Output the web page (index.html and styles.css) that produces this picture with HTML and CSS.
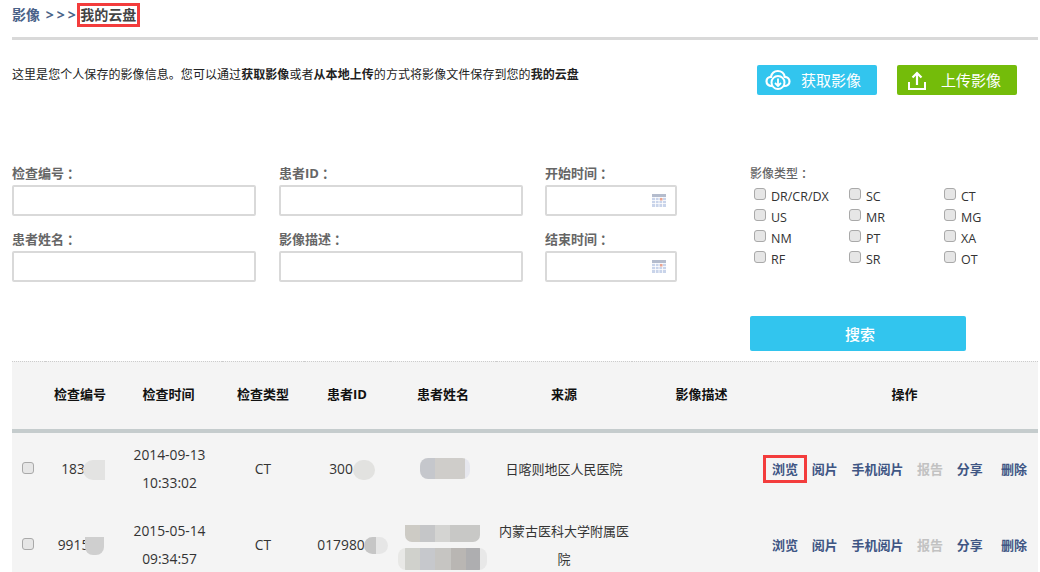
FILE: index.html
```html
<!DOCTYPE html>
<html lang="zh-CN">
<head>
<meta charset="utf-8">
<title>我的云盘</title>
<link rel="stylesheet" href="styles.css">
</head>
<body>
<header class="crumb">
  <span class="crumb-path">影像 <span class="arrows">&gt;&gt;&gt;</span></span>
  <span class="crumb-current">我的云盘</span>
</header>
<section class="intro">
  <p class="intro-text">这里是您个人保存的影像信息。您可以通过<b>获取影像</b>或者<b>从本地上传</b>的方式将影像文件保存到您的<b>我的云盘</b></p>
  <div class="intro-actions">
    <a class="btn btn-blue">
      <svg class="btn-icon" width="26" height="22" viewBox="0 0 26 22" fill="none" stroke="#fff" stroke-width="2.2"><path d="M7 17H6.500C3.600 17 1.500 14.900 1.500 12.300S3.600 7.800 6 7.800C6.800 4.200 9.600 2 12.800 2c3.600 0 6.400 2.500 6.900 5.800 2.800.1 4.800 2.200 4.800 4.700S22.400 17 19.500 17H19"/><circle cx="13" cy="13.500" r="6.500" stroke-width="2"/><path d="M13 9.500v7M10 14l3 3 3-3" stroke-width="1.800"/></svg>
      <span>获取影像</span>
    </a>
    <a class="btn btn-green">
      <svg class="btn-icon" width="18" height="19" viewBox="0 0 18 19" fill="none" stroke="#fff" stroke-width="2"><path d="M9 14V2M4.500 6.500 9 2l4.500 4.500" stroke-width="2.200"/><path d="M1 11v7h16v-7"/></svg>
      <span>上传影像</span>
    </a>
  </div>
</section>
<form class="filters">
  <div class="col col-wide">
    <label class="field"><span class="field-label">检查编号<i>：</i></span><input class="text-input" type="text"></label>
    <label class="field"><span class="field-label">患者姓名<i>：</i></span><input class="text-input" type="text"></label>
  </div>
  <div class="col col-wide col-second">
    <label class="field"><span class="field-label">患者ID<i>：</i></span><input class="text-input" type="text"></label>
    <label class="field"><span class="field-label">影像描述<i>：</i></span><input class="text-input" type="text"></label>
  </div>
  <div class="col col-date">
    <label class="field"><span class="field-label">开始时间<i>：</i></span>
      <span class="date-input"><input type="text">
        <svg width="14" height="13" viewBox="0 0 14 13"><rect width="14" height="13" fill="#c9d4ea"/><rect width="14" height="3" fill="#b4bccd"/><path d="M0 3.500h14M0 6.500h14M0 9.500h14M3.500 3v10M7 3v10M10.500 3v10" stroke="#fff" stroke-width=".8"/><rect x="8" y="4" width="2.500" height="2.500" fill="#eba48f"/></svg>
      </span></label>
    <label class="field"><span class="field-label">结束时间<i>：</i></span>
      <span class="date-input"><input type="text">
        <svg width="14" height="13" viewBox="0 0 14 13"><rect width="14" height="13" fill="#c9d4ea"/><rect width="14" height="3" fill="#b4bccd"/><path d="M0 3.500h14M0 6.500h14M0 9.500h14M3.500 3v10M7 3v10M10.500 3v10" stroke="#fff" stroke-width=".8"/><rect x="8" y="4" width="2.500" height="2.500" fill="#eba48f"/></svg>
      </span></label>
  </div>
  <div class="col col-types">
    <div class="types-label">影像类型<i>：</i></div>
    <div class="types-grid">
      <label class="type"><input class="check" type="checkbox">DR/CR/DX</label>
      <label class="type"><input class="check" type="checkbox">SC</label>
      <label class="type"><input class="check" type="checkbox">CT</label>
      <label class="type"><input class="check" type="checkbox">US</label>
      <label class="type"><input class="check" type="checkbox">MR</label>
      <label class="type"><input class="check" type="checkbox">MG</label>
      <label class="type"><input class="check" type="checkbox">NM</label>
      <label class="type"><input class="check" type="checkbox">PT</label>
      <label class="type"><input class="check" type="checkbox">XA</label>
      <label class="type"><input class="check" type="checkbox">RF</label>
      <label class="type"><input class="check" type="checkbox">SR</label>
      <label class="type"><input class="check" type="checkbox">OT</label>
    </div>
    <button class="search" type="button">搜索</button>
  </div>
</form>
<table class="records">
  <colgroup>
    <col class="c-check"><col class="c-no"><col class="c-time"><col class="c-type"><col class="c-id"><col class="c-name"><col class="c-src"><col class="c-desc"><col class="c-ops">
  </colgroup>
  <thead>
    <tr><th></th><th>检查编号</th><th>检查时间</th><th>检查类型</th><th>患者ID</th><th>患者姓名</th><th>来源</th><th>影像描述</th><th>操作</th></tr>
  </thead>
  <tbody>
    <tr>
      <td><input class="check row-check" type="checkbox"></td>
      <td class="num">183<span class="mask mask-a"></span></td>
      <td class="num time">2014-09-13<br>10:33:02</td>
      <td class="num">CT</td>
      <td class="num">300<span class="mask mask-b"></span></td>
      <td><span class="mask-block mask-name1"></span></td>
      <td>日喀则地区人民医院</td>
      <td></td>
      <td class="ops"><a class="op marked">浏览</a><a class="op">阅片</a><a class="op">手机阅片</a><a class="op off">报告</a><a class="op">分享</a><a class="op op-last">删除</a></td>
    </tr>
    <tr>
      <td><input class="check row-check" type="checkbox"></td>
      <td class="num">9915<span class="mask mask-c"></span></td>
      <td class="num time">2015-05-14<br>09:34:57</td>
      <td class="num">CT</td>
      <td class="num">017980<span class="mask mask-d"></span></td>
      <td><span class="mask-block mask-name2"></span><span class="mask-block mask-name3"></span></td>
      <td>内蒙古医科大学附属医院</td>
      <td></td>
      <td class="ops"><a class="op">浏览</a><a class="op">阅片</a><a class="op">手机阅片</a><a class="op off">报告</a><a class="op">分享</a><a class="op op-last">删除</a></td>
    </tr>
  </tbody>
</table>
</body>
</html>
```
FILE: styles.css
```css
* { box-sizing: border-box; }
html, body { height: 572px; overflow: hidden; }
body {
  margin: 0;
  padding: 0 2px 0 12px;
  background: #fff;
  color: #333;
  font: 13px/20px "Open Sans", "Noto Sans CJK SC", sans-serif;
}
i { font-style: normal; font-family: "Noto Sans CJK TC", sans-serif; padding-left: 3px; }

.crumb {
  height: 40px;
  padding-top: 3px;
  border-bottom: 3px solid #d9d9d9;
  display: flex;
  align-items: flex-start;
  font-size: 14px;
  font-weight: 700;
}
.crumb-path { color: #4a6288; line-height: 24px; white-space: nowrap; }
.arrows { margin: 0 -2px 0 2px; letter-spacing: 3px; font-size: 14px; }
.crumb-current {
  height: 24px;
  padding: 0 .5px;
  border: 3px solid #f33c3c;
  color: #444;
  line-height: 18px;
}

.intro { display: flex; justify-content: space-between; padding: 25px 21px 0 0; }
.intro-text { margin: 0; font-size: 12px; letter-spacing: .06px; color: #222; }
.intro-actions { display: flex; gap: 20px; }
.btn {
  width: 120px;
  height: 30px;
  border-radius: 2px;
  display: flex;
  align-items: center;
  color: #fff;
  font-size: 15px;
}
.btn-blue { background: #32c5ee; padding-left: 8px; gap: 10px; }
.btn-green { background: #74bc0a; padding-left: 11px; gap: 15px; }
.btn-icon { flex: none; }

.filters { display: flex; margin-top: 68px; }
.col-wide { width: 244px; margin-right: 23px; }
.col-second { margin-right: 22px; }
.col-date { width: 132px; margin-right: 73px; }
.col-types { width: 216px; }
.field { display: block; margin-bottom: 13px; }
.field-label { display: block; height: 22px; font-weight: 700; color: #666; }
.text-input, .date-input {
  display: flex;
  width: 100%;
  height: 31px;
  border: 2px solid #d9d9d9;
  border-radius: 2px;
  background: #fff;
}
.date-input { align-items: center; padding-right: 9px; }
.date-input input { flex: 1; min-width: 0; border: 0; outline: 0; background: none; }

.types-label { height: 22px; font-size: 12px; font-weight: 500; color: #666; }
.types-grid { display: grid; grid-template-columns: 95px 95px 70px; grid-auto-rows: 21px; padding-left: 4px; }
.type { display: flex; align-items: flex-start; gap: 5px; font-size: 12.500px; line-height: 23px; color: #333; white-space: nowrap; }
.check {
  appearance: none;
  width: 12px;
  height: 12px;
  margin: 3px 0 0;
  border: 1px solid #a9a9a9;
  border-radius: 3px;
  background: #e6e6e6;
  flex: none;
}
.search {
  display: block;
  width: 216px;
  height: 35px;
  margin-top: 47px;
  padding: 0 0 0 4px;
  border: 0;
  border-radius: 2px;
  background: #32c5ee;
  color: #fff;
  font: 500 15px "Open Sans", "Noto Sans CJK SC", sans-serif;
}

.records {
  width: 1026px;
  margin-top: 10px;
  border-collapse: collapse;
  table-layout: fixed;
  background: #f4f4f4;
  border-top: 1px dotted #ccc;
}
.c-check { width: 33px; }
.c-no { width: 70px; }
.c-time { width: 107px; }
.c-type { width: 82px; }
.c-id { width: 86px; }
.c-name { width: 106px; }
.c-src { width: 136px; }
.c-desc { width: 139px; }
th {
  height: 69px;
  padding: 0 0 2px;
  border-bottom: 4px solid #c5cccd;
  font-weight: 700;
  color: #111;
}
td {
  height: 76px;
  padding: 0 0 4px;
  text-align: center;
  line-height: 28px;
  color: #333;
}
.num { font-size: 13.800px; white-space: nowrap; }
td.time { padding-left: 2px; }
.row-check { display: block; margin: -2px 0 0 10px; }

.mask { display: inline-block; vertical-align: middle; }
.mask-a { width: 22px; height: 20px; margin-left: -2px; margin-right: -6px; border-radius: 10px 0 0 10px / 10px; background: #e3e3e2; }
.mask-b { width: 22px; height: 20px; margin-right: -10px; border-radius: 10px; background: #e2e2e0; }
.mask-c { width: 19px; height: 18px; margin-left: -4px; margin-right: -2px; border-radius: 0 0 8px 8px; background: #cfcfcf; }
.mask-d { width: 24px; height: 17px; margin-left: -1px; margin-right: -11px; border-radius: 9px; background: linear-gradient(90deg, #c6c6c6 50%, #e6e6e6 50%); }
.mask-block { display: block; }
.mask-name1 { width: 50px; height: 21px; margin-left: 30px; border-radius: 8px; background: linear-gradient(90deg, #c5c7cc 30%, #cfcdca 30%, #cfcdca 90%, #e6e7ee 90%); }
.mask-name2 { width: 75px; height: 17px; margin: 6px 0 6px 15px; border-radius: 0 0 7px 7px; background: linear-gradient(90deg, #cdcbc5 20%, #c5c6c8 20%, #c5c6c8 40%, #d4d4d2 40%, #d4d4d2 60%, #c8c8c6 60%); }
.mask-name3 { width: 89px; height: 22px; margin-left: 8px; border-radius: 8px; background: linear-gradient(90deg, #e8e8e6 8%, #d0d1cc 8%, #d0d1cc 25%, #c6c8cc 25%, #c6c8cc 42%, #c6c5c2 42%, #c6c5c2 60%, #b9b6b3 60%, #b9b6b3 76%, #aeaeb0 76%, #aeaeb0 92%, #e8e8e8 92%); }

.ops { display: flex; align-items: center; height: 76px; gap: 13.700px; padding-left: 1px; }
.op { position: relative; font-weight: 700; color: #3f5684; white-space: nowrap; line-height: 20px; }
.op-last { margin-left: 4.500px; }
.op.off { color: #c2c2c2; }
.marked::after {
  content: "";
  position: absolute;
  inset: -4px -9px;
  border: 3px solid #f33c3c;
}
```
